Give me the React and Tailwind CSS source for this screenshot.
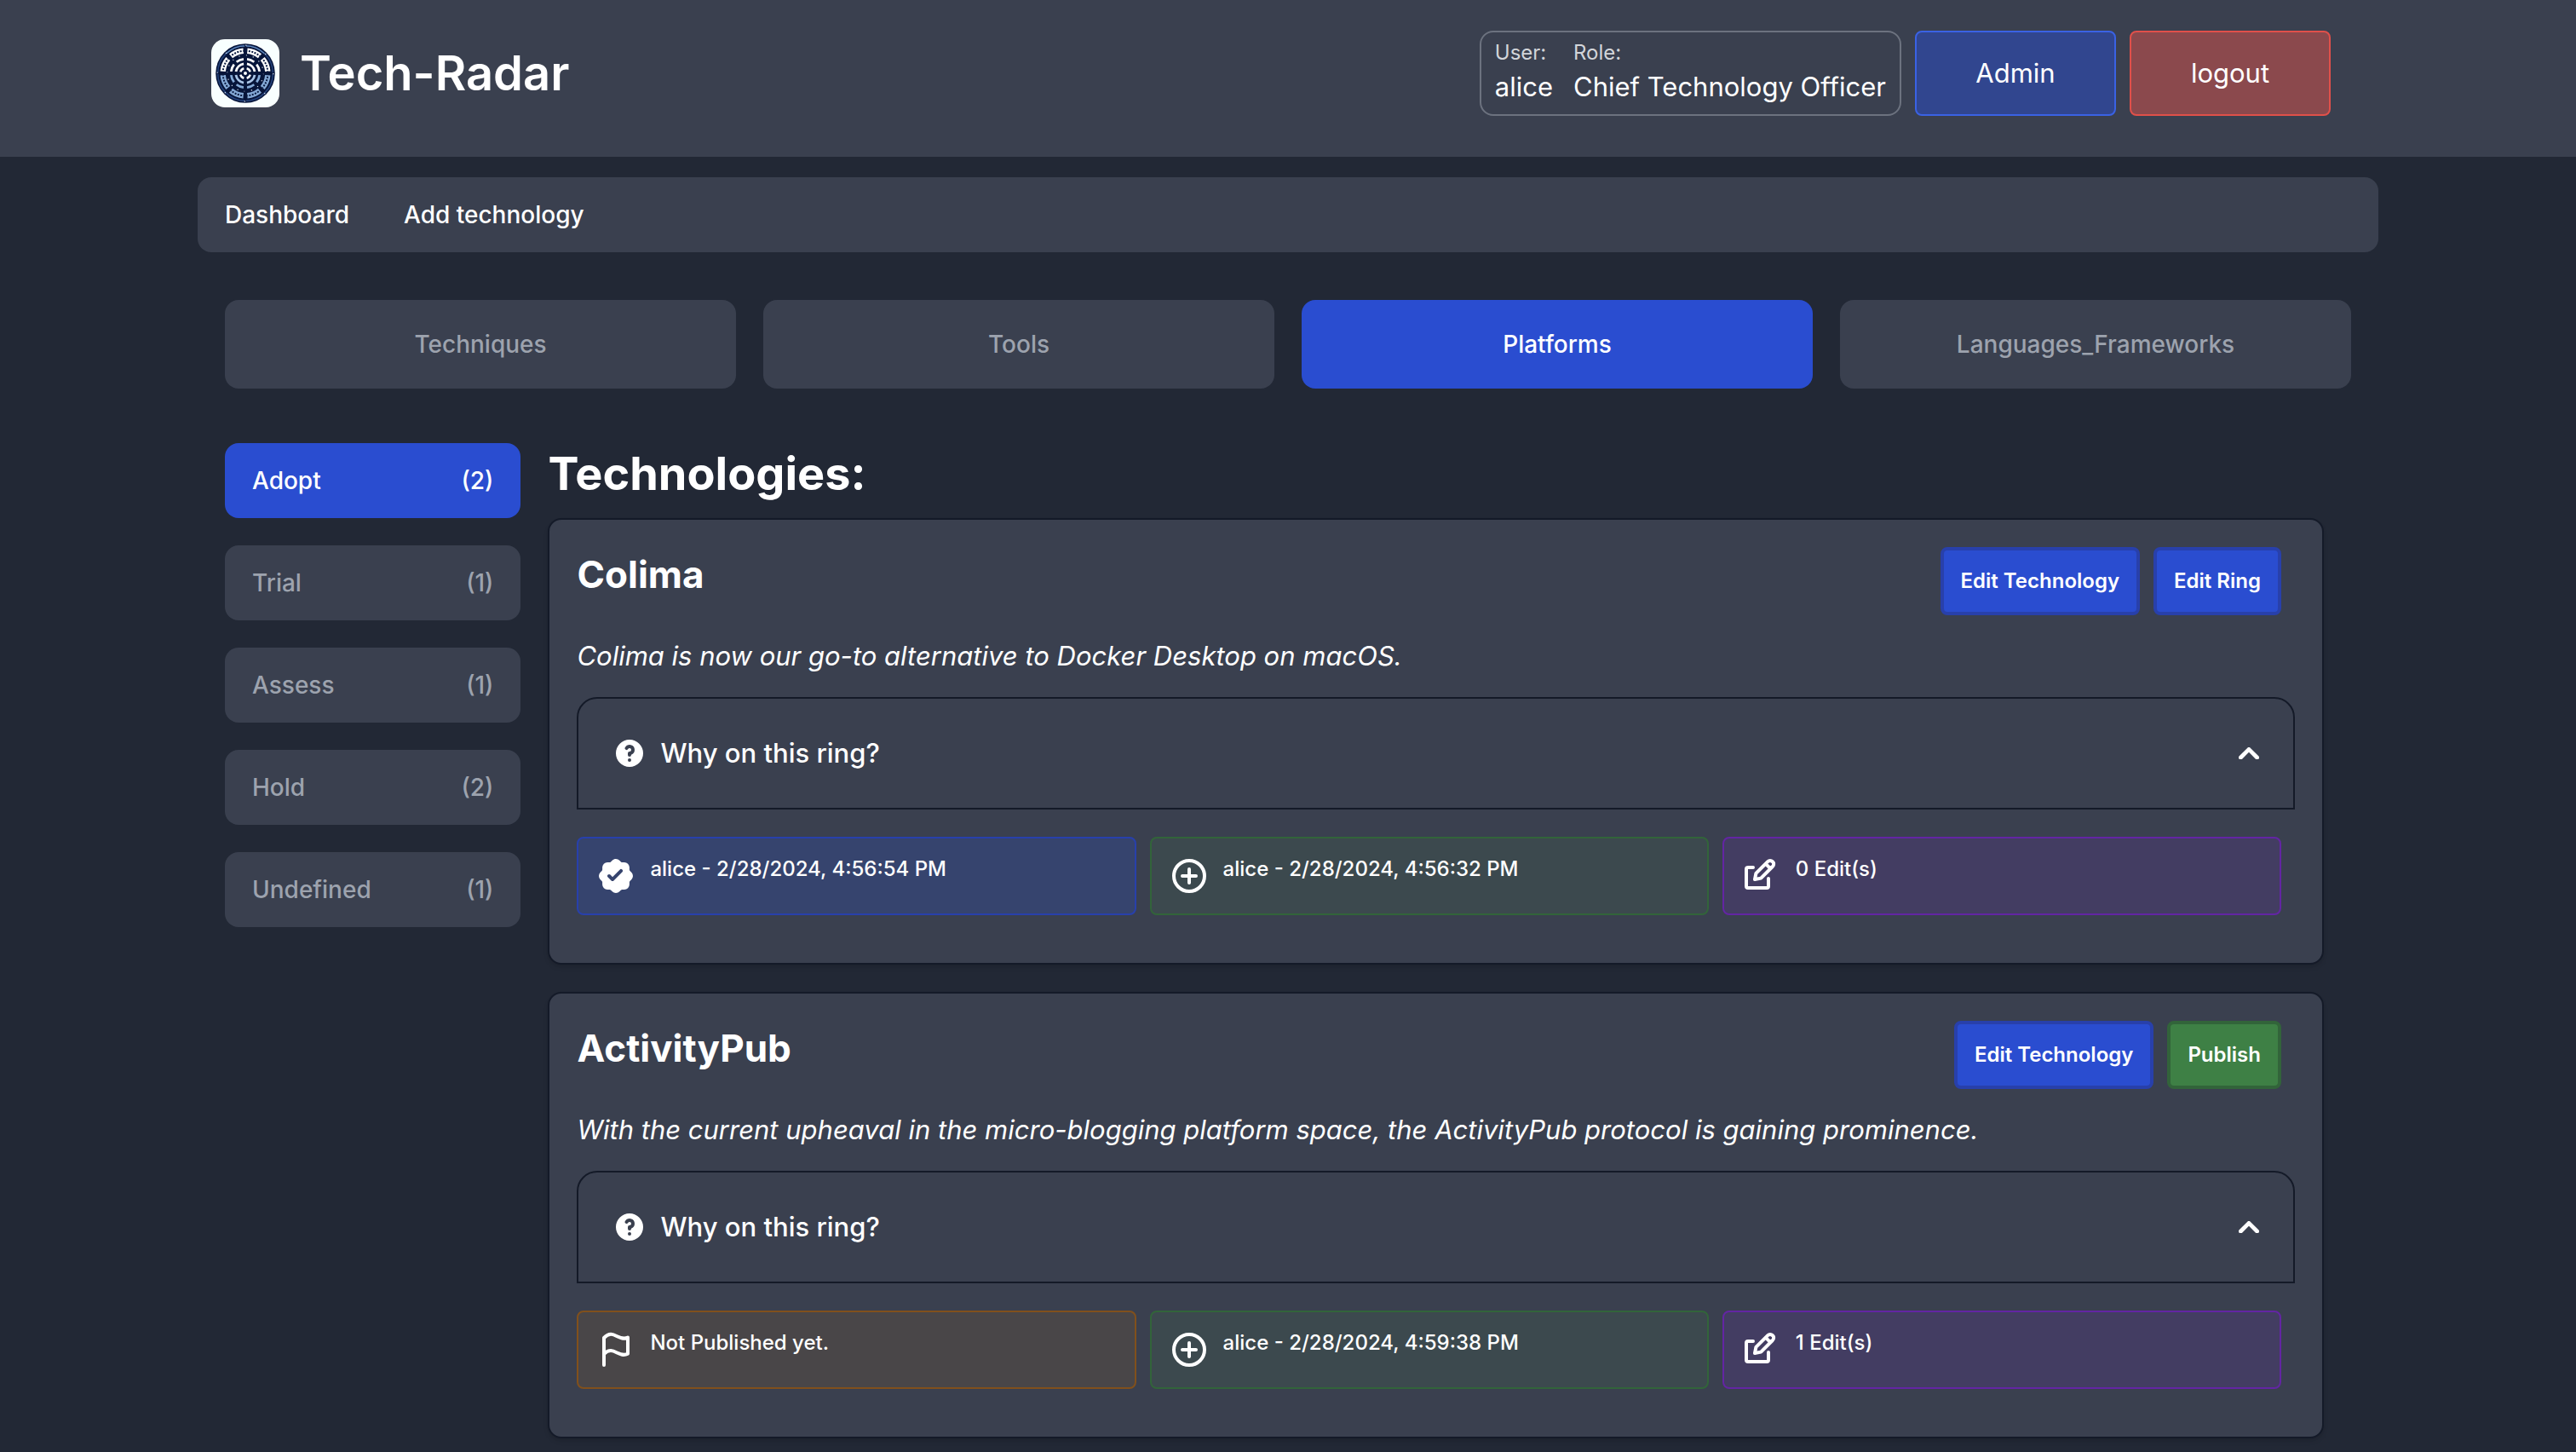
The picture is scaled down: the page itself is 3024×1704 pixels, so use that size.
import React from "react";

const quadrants = ["Techniques", "Tools", "Platforms", "Languages_Frameworks"];

const rings = [
  { name: "Adopt", count: 2 },
  { name: "Trial", count: 1 },
  { name: "Assess", count: 1 },
  { name: "Hold", count: 2 },
  { name: "Undefined", count: 1 },
];

const technologies = [
  {
    name: "Colima",
    description: "Colima is now our go-to alternative to Docker Desktop on macOS.",
    published: "alice - 2/28/2024, 4:56:54 PM",
    created: "alice - 2/28/2024, 4:56:32 PM",
    edits: 0,
  },
  {
    name: "ActivityPub",
    description:
      "With the current upheaval in the micro-blogging platform space, the ActivityPub protocol is gaining prominence.",
    published: null,
    created: "alice - 2/28/2024, 4:59:38 PM",
    edits: 1,
  },
];

function RadarRing({ r, width, top, bottom, gap, spokes, dotted = false }) {
  const step = 360 / spokes;
  const arcs = [];
  for (let i = 0; i < spokes; i++) {
    const a0 = ((i * step + gap) * Math.PI) / 180;
    const a1 = (((i + 1) * step - gap) * Math.PI) / 180;
    const isTop = (a0 + a1) / 2 > Math.PI;
    const d = `M${50 + r * Math.cos(a0)} ${50 + r * Math.sin(a0)}A${r} ${r} 0 0 1 ${50 + r * Math.cos(a1)} ${50 + r * Math.sin(a1)}`;
    arcs.push(
      <g key={i} fill="none">
        <path d={d} stroke={isTop ? top : bottom} strokeWidth={width} />
        {dotted && <path d={d} stroke="#0a1a40" strokeWidth="2.500" strokeDasharray="2.500 1.800" strokeDashoffset="-2" />}
      </g>
    );
  }
  return <g>{arcs}</g>;
}

function Logo() {
  return (
    <svg viewBox="0 0 100 100" className="size-20 rounded-2xl bg-[#f8ffff]" aria-hidden="true">
      <circle cx="50" cy="50" r="43.500" fill="#07153a" />
      <circle cx="50" cy="50" r="40.500" fill="none" stroke="#24427a" strokeWidth="2" />
      <path d="M22 21A40.500 40.500 0 0 1 78 21" fill="none" stroke="#5f88bb" strokeWidth="1.500" />
      <RadarRing r={33} width={8} top="#ffffff" bottom="#84a9d6" gap={5} spokes={8} dotted />
      <circle cx="50" cy="50" r="26.500" fill="none" stroke="#dfe9f5" strokeWidth="1.500" strokeDasharray="1.500 8.900" />
      <RadarRing r={21} width={3.5} top="#ffffff" bottom="#84a9d6" gap={7} spokes={8} />
      <RadarRing r={14} width={3.5} top="#ffffff" bottom="#a9c4e6" gap={10} spokes={4} />
      <RadarRing r={7.5} width={3} top="#ffffff" bottom="#ffffff" gap={16} spokes={4} />
      <path d="M50 8V92M8 50H92" stroke="#07153a" strokeWidth="2" />
      <circle cx="50" cy="50" r="2.500" fill="#ffffff" />
      <circle cx="50" cy="50" r="41" fill="none" stroke="#dfe9f5" strokeWidth="1.500" strokeDasharray="1.500 30.700" />
    </svg>
  );
}

function QuestionIcon() {
  return (
    <svg viewBox="0 0 20 20" fill="currentColor" className="size-10 shrink-0" aria-hidden="true">
      <path
        fillRule="evenodd"
        clipRule="evenodd"
        d="M18 10a8 8 0 11-16 0 8 8 0 0116 0zm-8-3a1 1 0 00-.867.5 1 1 0 11-1.731-1A3 3 0 0113 8a3.001 3.001 0 01-2 2.830V11a1 1 0 11-2 0v-1a1 1 0 011-1 1 1 0 100-2zm0 8a1 1 0 100-2 1 1 0 000 2z"
      />
    </svg>
  );
}

function ChevronUp() {
  return (
    <svg viewBox="0 0 10 6" fill="none" className="w-6 shrink-0" aria-hidden="true">
      <path d="M9 5 5 1 1 5" stroke="currentColor" strokeWidth="2" strokeLinecap="round" strokeLinejoin="round" />
    </svg>
  );
}

function BadgeIcon() {
  return (
    <svg viewBox="0 0 24 24" fill="currentColor" className="size-12 shrink-0" aria-hidden="true">
      <path
        fillRule="evenodd"
        clipRule="evenodd"
        d="M12 2c-.791 0-1.550.314-2.110.874l-.893.893a.985.985 0 0 1-.696.288H7.040A2.984 2.984 0 0 0 4.055 7.040v1.262a.986.986 0 0 1-.288.696l-.893.893a2.984 2.984 0 0 0 0 4.220l.893.893a.985.985 0 0 1 .288.696v1.262a2.984 2.984 0 0 0 2.984 2.984h1.262c.261 0 .512.104.696.288l.893.893a2.984 2.984 0 0 0 4.220 0l.893-.893a.985.985 0 0 1 .696-.288h1.262a2.984 2.984 0 0 0 2.984-2.984V15.700c0-.261.104-.512.288-.696l.893-.893a2.984 2.984 0 0 0 0-4.220l-.893-.893a.985.985 0 0 1-.288-.696V7.040a2.984 2.984 0 0 0-2.984-2.984h-1.262a.985.985 0 0 1-.696-.288l-.893-.893A2.984 2.984 0 0 0 12 2Zm3.683 7.730a1 1 0 1 0-1.414-1.413l-4.253 4.253-1.277-1.277a1 1 0 0 0-1.415 1.414l1.985 1.984a1 1 0 0 0 1.414 0l4.960-4.960Z"
      />
    </svg>
  );
}

function LineIcon({ d }) {
  return (
    <svg
      viewBox="0 0 24 24"
      fill="none"
      stroke="currentColor"
      strokeWidth="2"
      strokeLinecap="round"
      strokeLinejoin="round"
      className="size-12 shrink-0"
      aria-hidden="true"
    >
      <path d={d} />
    </svg>
  );
}

const FLAG = "M5 14v7M5 5v9.500c5.600-5.500 8.400 2.600 14-.100v-9.600c-5.600 2.700-8.400-5.500-14 .200Z";
const PLUS = "M12 8v8m-4-4h8m5 0a9 9 0 1 1-18 0 9 9 0 0 1 18 0Z";
const EDIT =
  "m14.300 4.800 2.900 2.900M7 7H4a1 1 0 0 0-1 1v10c0 .600.400 1 1 1h11c.600 0 1-.400 1-1v-4.500m2.400-10a2 2 0 0 1 0 3l-6.800 6.800L8 14l.700-3.600 6.900-6.800a2 2 0 0 1 2.800 0Z";

function Stat({ tone, icon, children }) {
  return (
    <div className={`flex items-start gap-4 rounded-lg border-2 p-5 ${tone}`}>
      {icon}
      <p className="text-2xl font-medium">{children}</p>
    </div>
  );
}

function ActionButton({ tone, children }) {
  return (
    <button type="button" className={`rounded-lg border-4 px-5 py-5 text-2xl font-semibold ${tone}`}>
      {children}
    </button>
  );
}

function TechnologyCard({ tech }) {
  const blue = "border-[#2840ab] bg-[#2a4dd0]";
  return (
    <article className="rounded-2xl border-2 border-[#141a28] bg-[#3a404f] px-8 pt-8 pb-14 shadow-md">
      <div className="flex items-start justify-between pr-4">
        <h2 className="text-[44px] leading-16 font-bold">{tech.name}</h2>
        <div className="flex gap-4">
          <ActionButton tone={blue}>Edit Technology</ActionButton>
          {tech.published ? (
            <ActionButton tone={blue}>Edit Ring</ActionButton>
          ) : (
            <ActionButton tone="border-[#32643a] bg-[#3e8045]">Publish</ActionButton>
          )}
        </div>
      </div>
      <p className="my-6 text-[31px] leading-12 italic">{tech.description}</p>
      <button
        type="button"
        aria-expanded="false"
        className="flex w-full items-center justify-between rounded-t-3xl border-2 border-[#141a28] p-10 text-left"
      >
        <span className="flex items-center gap-4 text-[31px] leading-12 font-medium">
          <QuestionIcon />
          Why on this ring?
        </span>
        <ChevronUp />
      </button>
      <div className="mt-8 grid grid-cols-3 gap-4 pr-4">
        {tech.published ? (
          <Stat tone="border-[#2840ab] bg-[#36446e]" icon={<BadgeIcon />}>
            {tech.published}
          </Stat>
        ) : (
          <Stat tone="border-[#81501c] bg-[#494648]" icon={<LineIcon d={FLAG} />}>
            Not Published yet.
          </Stat>
        )}
        <Stat tone="border-[#32643a] bg-[#3c494e]" icon={<LineIcon d={PLUS} />}>
          {tech.created}
        </Stat>
        <Stat tone="border-[#6325a3] bg-[#433d62]" icon={<LineIcon d={EDIT} />}>
          {tech.edits} Edit(s)
        </Stat>
      </div>
    </article>
  );
}

export default function App() {
  return (
    <div className="min-h-screen bg-[#222835] font-['Inter','Liberation_Sans',sans-serif] text-white">
      <header className="bg-[#3a404f]">
        <div className="mx-auto flex max-w-[2560px] items-start justify-between pt-9 pr-14 pb-12 pl-4">
          <a href="#home" className="flex items-center gap-6 pt-2.5">
            <Logo />
            <span className="text-[56px] leading-20 font-semibold">Tech-Radar</span>
          </a>
          <div className="flex gap-4">
            <dl className="flex gap-6 rounded-2xl border-2 border-[#6c727f] px-4 py-2">
              <div>
                <dt className="text-2xl text-[#d2d5da]">User:</dt>
                <dd className="text-[31px] leading-12">alice</dd>
              </div>
              <div>
                <dt className="text-2xl text-[#d2d5da]">Role:</dt>
                <dd className="text-[31px] leading-12">Chief Technology Officer</dd>
              </div>
            </dl>
            <button type="button" className="w-59 rounded-lg border-2 border-[#3a62e4] bg-[#31468f] text-[31px]">
              Admin
            </button>
            <button type="button" className="w-59 rounded-lg border-2 border-[#e0504a] bg-[#8b494d] text-[31px]">
              logout
            </button>
          </div>
        </div>
      </header>

      <div className="mx-auto max-w-[2560px] pt-6">
        <nav className="flex gap-16 rounded-2xl bg-[#3a404f] px-8 py-6 text-[28px] leading-10 font-medium">
          <a href="#dashboard">Dashboard</a>
          <a href="#add">Add technology</a>
        </nav>

        <div className="mt-14 grid grid-cols-4 gap-8 px-8">
          {quadrants.map((q) => (
            <button
              key={q}
              type="button"
              className={`rounded-2xl py-8 text-[28px] leading-10 font-medium ${
                q === "Platforms" ? "bg-[#2a4dd0]" : "bg-[#3a404f] text-[#9da3ae]"
              }`}
            >
              {q}
            </button>
          ))}
        </div>

        <div className="mt-16 grid grid-cols-[1fr_6fr] gap-8 pr-16 pl-8">
          <div className="flex flex-col gap-8">
            {rings.map((r) => (
              <button
                key={r.name}
                type="button"
                className={`flex justify-between rounded-2xl px-8 py-6 text-[28px] leading-10 font-medium ${
                  r.name === "Adopt" ? "bg-[#2a4dd0]" : "bg-[#3a404f] text-[#9da3ae]"
                }`}
              >
                <span>{r.name}</span>
                <span>({r.count})</span>
              </button>
            ))}
          </div>
          <main>
            <h1 className="text-[54px] leading-18 font-bold">Technologies:</h1>
            <div className="mt-4 flex flex-col gap-8">
              {technologies.map((t) => (
                <TechnologyCard key={t.name} tech={t} />
              ))}
            </div>
          </main>
        </div>
      </div>
    </div>
  );
}
